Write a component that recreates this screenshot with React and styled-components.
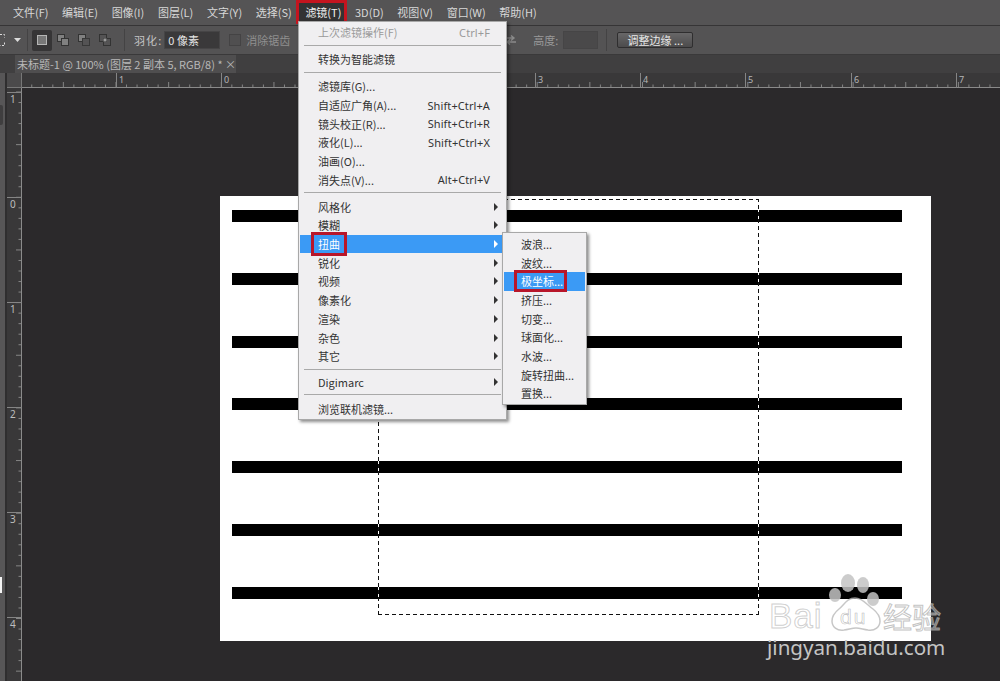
import React from 'react';
import styled, { createGlobalStyle } from 'styled-components';

const GlobalStyle = createGlobalStyle`
  html, body {
    margin: 0;
    padding: 0;
    background: #2b292b;
    overflow: hidden;
  }
  body {
    font-family: "Noto Sans CJK SC", "Noto Sans", sans-serif;
    font-size: 11px;
  }
  * {
    box-sizing: border-box;
  }
`;

const Page = styled.div`
  position: relative;
  display: flex;
  flex-direction: column;
  width: 1000px;
  height: 681px;
  overflow: hidden;
  background: #2b292b;
`;

const MenuBar = styled.div`
  display: flex;
  align-items: center;
  gap: 13.6px;
  height: 26px;
  padding: 0 0 2px 13px;
  background: #555455;
  border-bottom: 1px solid #363536;
  color: #d8d8d8;
  white-space: nowrap;
`;

const MenuTitle = styled.div`
  position: relative;
  line-height: 24px;
  ${props => props.active && `
    color: #f0f0f0;
    &::before {
      content: '';
      position: absolute;
      inset: 0 -6px 0 -9px;
      background: #333233;
      border: 3px solid #c4141f;
      z-index: 0;
    }
  `}
`;

const TitleText = styled.span`
  position: relative;
`;

const OptionsBar = styled.div`
  display: flex;
  align-items: center;
  height: 29px;
  background: #545354;
  border-bottom: 1px solid #3a393a;
  color: #bdbdbd;
  white-space: nowrap;
`;

const ModeButton = styled.div`
  display: flex;
  align-items: center;
  justify-content: center;
  width: 20px;
  height: 21px;
  margin-right: 1px;
  border-radius: 2px;
  background: ${props => (props.active ? '#363536' : 'transparent')};
`;

const Divider = styled.div`
  width: 1px;
  height: 22px;
  background: #444344;
  margin: ${props => props.margin};
`;

const Label = styled.span`
  color: ${props => props.color || '#c4c4c4'};
  margin-right: ${props => props.gap || 0}px;
  letter-spacing: ${props => props.spacing || 0}px;
`;

const FieldBox = styled.div`
  display: flex;
  align-items: center;
  width: ${props => props.width}px;
  height: 18px;
  padding-left: 3px;
  background: ${props => props.bg || '#3a393a'};
  border: 1px solid #464546;
  color: #e4e4e4;
`;

const CheckBox = styled.div`
  width: 12px;
  height: 12px;
  margin: 0 5px 0 9px;
  background: #504f50;
  border: 1px solid #444344;
`;

const EdgeButton = styled.div`
  display: flex;
  align-items: center;
  justify-content: center;
  width: 76px;
  height: 16px;
  background: linear-gradient(#686768, #4c4b4c);
  border: 1px solid #2f2e2f;
  border-radius: 2px;
  color: #e8e8e8;
`;

const TabBar = styled.div`
  display: flex;
  align-items: flex-end;
  height: 18px;
  padding-left: 15px;
  background: #403f40;
`;

const DocTab = styled.div`
  display: flex;
  align-items: center;
  justify-content: space-between;
  width: 221px;
  height: 18px;
  padding: 0 0 0 2px;
  background: #4f4e4f;
  color: #b8b8b8;
  font-size: 11px;
  white-space: nowrap;
`;

const Workspace = styled.div`
  flex: 1;
  display: grid;
  grid-template-columns: 5px 2px 15px 1fr;
  grid-template-rows: 15px 1fr;
`;

const ToolStrip = styled.div`
  grid-row: 1 / 3;
  position: relative;
  background: #575657;
`;

const StripGrip = styled.div`
  position: absolute;
  left: 0;
  top: 32px;
  width: 3px;
  height: 20px;
  background: #3f3e3f;
  border-radius: 0 2px 2px 0;
`;

const StripSwatch = styled.div`
  position: absolute;
  left: 0;
  top: 504px;
  width: 2px;
  height: 16px;
  background: #f4f4f4;
`;

const StripGap = styled.div`
  grid-row: 1 / 3;
  background: #2f2e2f;
`;

const RulerCorner = styled.div`
  background: #4b4a4b;
  border-right: 1px solid #777;
  border-bottom: 1px solid #777;
`;

const TopRuler = styled.div`
  background: #393839;
  overflow: hidden;
  line-height: 0;
`;

const SideRuler = styled.div`
  background: #393839;
  overflow: hidden;
  line-height: 0;
`;

const Canvas = styled.div`
  background: #2b292b;
  padding: 108px 0 0 198px;
`;

const Document = styled.div`
  position: relative;
  display: flex;
  flex-direction: column;
  justify-content: space-between;
  width: 711px;
  height: 445px;
  padding: 14px 29px 42px 12px;
  background: #fff;
`;

const Stripe = styled.div`
  height: 12px;
  background: #000;
`;

const Selection = styled.div`
  position: absolute;
  left: 158px;
  top: 3px;
  width: 381px;
  height: 416px;
  background-image:
    repeating-linear-gradient(90deg, #111 0 4px, #fff 4px 7px),
    repeating-linear-gradient(90deg, #111 0 4px, #fff 4px 7px),
    repeating-linear-gradient(0deg, #111 0 4px, #fff 4px 7px),
    repeating-linear-gradient(0deg, #111 0 4px, #fff 4px 7px);
  background-size: 100% 1px, 100% 1px, 1px 100%, 1px 100%;
  background-position: 0 0, 0 100%, 0 0, 100% 0;
  background-repeat: no-repeat;
`;

const Menu = styled.div`
  position: absolute;
  left: ${props => props.left}px;
  top: ${props => props.top}px;
  width: ${props => props.width}px;
  padding: ${props => props.pad};
  background: #f0eff1;
  border: 1px solid #a8a8a8;
  box-shadow: 2px 2px 3px rgba(0, 0, 0, 0.45);
  color: #333;
  white-space: nowrap;
  z-index: 5;
`;

const Row = styled.div`
  position: relative;
  display: flex;
  align-items: center;
  justify-content: space-between;
  height: 18.7px;
  padding: ${props => props.pad};
  color: ${props => (props.disabled ? '#9a9a9a' : props.active ? '#fff' : '#333')};
  background: ${props => (props.active ? '#3b9af5' : 'transparent')};
`;

const Shortcut = styled.span`
  color: inherit;
  font-family: "Noto Sans", sans-serif;
  font-size: 11px;
  letter-spacing: 0.1px;
`;

const Arrow = styled.i`
  position: absolute;
  right: 7px;
  top: 50%;
  margin-top: -4px;
  width: 0;
  height: 0;
  border-left: 4px solid ${props => (props.active ? '#fff' : '#333')};
  border-top: 4px solid transparent;
  border-bottom: 4px solid transparent;
`;

const Sep = styled.div`
  height: 1px;
  margin: 3px 4px ${props => props.below || 4.3}px;
  background: #a9a9a9;
`;

const Marked = styled.span`
  position: relative;
  &::after {
    content: '';
    position: absolute;
    inset: ${props => props.inset};
    border: 3px solid #b8162a;
  }
`;

const Watermark = styled.div`
  position: absolute;
  left: 765px;
  top: 572px;
  width: 190px;
  height: 90px;
  z-index: 3;
`;

const WmPaw = styled.svg`
  position: absolute;
  left: 0;
  top: 0;
`;

const WmBai = styled.span`
  position: absolute;
  left: 4px;
  top: 22px;
  font-family: "Liberation Sans", sans-serif;
  font-size: 35px;
  line-height: 44px;
  color: rgba(255, 255, 255, 0.4);
  -webkit-text-stroke: 1px rgba(175, 175, 175, 0.6);
  letter-spacing: 1px;
`;

const WmDu = styled.span`
  position: absolute;
  left: 75px;
  top: 33px;
  font-family: "Liberation Sans", sans-serif;
  font-size: 21px;
  line-height: 24px;
  letter-spacing: 2px;
  color: rgba(255, 255, 255, 0.3);
  -webkit-text-stroke: 0.6px rgba(170, 170, 170, 0.8);
`;

const WmCn = styled.span`
  position: absolute;
  left: 118px;
  top: 26px;
  font-size: 29px;
  line-height: 36px;
  color: rgba(255, 255, 255, 0.35);
  -webkit-text-stroke: 1px rgba(175, 175, 175, 0.75);
`;

const WmUrl = styled.span`
  position: absolute;
  left: 2px;
  top: 61px;
  font-family: "Noto Sans", sans-serif;
  font-size: 20.6px;
  line-height: 28px;
  color: #c4c4c4;
`;

const TOP_MENU = ['文件(F)', '编辑(E)', '图像(I)', '图层(L)', '文字(Y)', '选择(S)', '滤镜(T)', '3D(D)', '视图(V)', '窗口(W)', '帮助(H)'];

const GROUP_ONE = [
  ['滤镜库(G)...', ''],
  ['自适应广角(A)...', 'Shift+Ctrl+A'],
  ['镜头校正(R)...', 'Shift+Ctrl+R'],
  ['液化(L)...', 'Shift+Ctrl+X'],
  ['油画(O)...', ''],
  ['消失点(V)...', 'Alt+Ctrl+V']
];

const GROUP_TWO = ['风格化', '模糊', '扭曲', '锐化', '视频', '像素化', '渲染', '杂色', '其它'];

const WARP_ITEMS = ['波浪...', '波纹...', '极坐标...', '挤压...', '切变...', '球面化...', '水波...', '旋转扭曲...', '置换...'];

const ROW_PAD = '0 15px 0 18px';

const SquareIcon = ({ variant }) => (
  <svg width="14" height="14" viewBox="0 0 14 14">
    {variant === 'new' && <rect x="2.5" y="2.5" width="9" height="9" fill="#777" stroke="#b5b5b5" />}
    {variant === 'add' && (
      <>
        <rect x="1.5" y="1.5" width="7" height="7" fill="#808080" stroke="#333" />
        <rect x="5.5" y="5.5" width="7" height="7" fill="#808080" stroke="#333" />
      </>
    )}
    {variant === 'sub' && (
      <>
        <rect x="1.5" y="1.5" width="7" height="7" fill="#808080" stroke="#333" />
        <rect x="5.5" y="5.5" width="7" height="7" fill="#545354" stroke="#383838" />
      </>
    )}
    {variant === 'cross' && (
      <>
        <rect x="1.5" y="1.5" width="7" height="7" fill="none" stroke="#333" />
        <rect x="5.5" y="5.5" width="7" height="7" fill="none" stroke="#333" />
        <rect x="5.5" y="5.500" width="3" height="3" fill="#999" />
      </>
    )}
  </svg>
);

const HORIZONTAL_MAJORS = [[94, '1'], [199, '0'], [513, '3'], [618, '4'], [723, '5'], [829, '6'], [934, '7']];
const VERTICAL_MAJORS = [[4, '1'], [109, '0'], [214, '1'], [319, '2'], [424, '3'], [529, '4']];

const ticks = (count, start) => {
  const out = [];
  for (let i = 0; i < count; i += 1) {
    out.push({ pos: start + i * 10.53, long: i % 5 === 0 });
  }
  return out;
};

const HRuler = () => (
  <svg width="978" height="15">
    <line x1="0" y1="14.5" x2="978" y2="14.5" stroke="#8a8a8a" />
    {ticks(96, -11.3).map(t => (
      <line key={t.pos} x1={t.pos} x2={t.pos} y1={t.long ? 9 : 11.5} y2="14" stroke="#858585" />
    ))}
    {HORIZONTAL_MAJORS.map(([x, label]) => (
      <g key={x}>
        <line x1={x + 0.5} x2={x + 0.5} y1="0" y2="15" stroke="#858585" />
        <text x={x + 3} y="10" fontSize="9" fill="#b5b5b5" fontFamily="Noto Sans, sans-serif">{label}</text>
      </g>
    ))}
  </svg>
);

const VRuler = () => (
  <svg width="15" height="593">
    <line x1="14.5" y1="0" x2="14.5" y2="593" stroke="#8a8a8a" />
    {ticks(58, 4).map(t => (
      <line key={t.pos} y1={t.pos} y2={t.pos} x1={t.long ? 9 : 11.5} x2="14" stroke="#858585" />
    ))}
    {VERTICAL_MAJORS.map(([y, label]) => (
      <g key={y}>
        <line y1={y + 0.5} y2={y + 0.5} x1="0" x2="15" stroke="#858585" />
        <text x="3" y={y + 11} fontSize="10" fill="#bdbdbd" fontFamily="Noto Sans, sans-serif">{label}</text>
      </g>
    ))}
  </svg>
);

export default function App() {
  return (
    <Page>
      <GlobalStyle />
      <MenuBar>
        {TOP_MENU.map(name => (
          <MenuTitle key={name} active={name === '滤镜(T)'}>
            <TitleText>{name}</TitleText>
          </MenuTitle>
        ))}
      </MenuBar>

      <OptionsBar>
        <svg width="7" height="14" viewBox="0 0 7 14" style={{ marginRight: 7 }}>
          <path d="M0 1.5h4.5v3M4.5 9.5v3H0" fill="none" stroke="#ddd" strokeDasharray="2 1.5" />
        </svg>
        <svg width="7" height="4" viewBox="0 0 7 4">
          <path d="M0 0h7L3.5 4z" fill="#ddd" />
        </svg>
        <Divider margin="0 4px 0 6px" />
        <ModeButton active><SquareIcon variant="new" /></ModeButton>
        <ModeButton><SquareIcon variant="add" /></ModeButton>
        <ModeButton><SquareIcon variant="sub" /></ModeButton>
        <ModeButton><SquareIcon variant="cross" /></ModeButton>
        <Divider margin="0 9px 0 8px" />
        <Label gap={2} spacing={1.1}>羽化:</Label>
        <FieldBox width={56}>0 像素</FieldBox>
        <CheckBox />
        <Label color="#8f8f8f" gap={-2}>消除锯齿</Label>
        <svg width="13" height="12" viewBox="0 0 13 12" style={{ margin: '0 16px 0 216px' }}>
          <path d="M1 4h8M7 1.5L10 4 7 6.5M12 8H4M6 5.5L3 8l3 2.500" fill="none" stroke="#8a8a8a" strokeWidth="1.400" />
        </svg>
        <Label color="#9a9a9a" gap={5}>高度:</Label>
        <FieldBox width={35} bg="#4a494a" />
        <Divider margin="0 10px 0 8px" />
        <EdgeButton>调整边缘 ...</EdgeButton>
      </OptionsBar>

      <TabBar>
        <DocTab>
          <span>未标题-1 @ 100% (图层 2 副本 5, RGB/8) *</span>
          <span>×</span>
        </DocTab>
      </TabBar>

      <Workspace>
        <ToolStrip>
          <StripGrip />
          <StripSwatch />
        </ToolStrip>
        <StripGap />
        <RulerCorner />
        <TopRuler><HRuler /></TopRuler>
        <SideRuler><VRuler /></SideRuler>
        <Canvas>
          <Document>
            {[0, 1, 2, 3, 4, 5, 6].map(i => <Stripe key={i} />)}
            <Selection />
          </Document>
        </Canvas>
      </Workspace>

      <Menu left={298} top={21} width={209} pad="1px 1px 0">
        <Row pad={ROW_PAD} disabled>上次滤镜操作(F)<Shortcut>Ctrl+F</Shortcut></Row>
        <Sep />
        <Row pad={ROW_PAD}>转换为智能滤镜</Row>
        <Sep />
        {GROUP_ONE.map(([label, keys]) => (
          <Row key={label} pad={ROW_PAD}>{label}{keys && <Shortcut>{keys}</Shortcut>}</Row>
        ))}
        <Sep />
        {GROUP_TWO.map(label => (
          <Row key={label} pad={ROW_PAD} active={label === '扭曲'}>
            {label === '扭曲' ? <Marked inset="-4px -7px">{label}</Marked> : label}
            <Arrow active={label === '扭曲'} />
          </Row>
        ))}
        <Sep below={2.8} />
        <Row pad={ROW_PAD}>Digimarc<Arrow /></Row>
        <Sep below={5} />
        <Row pad={ROW_PAD}>浏览联机滤镜...</Row>
      </Menu>

      <Menu left={502} top={232} width={85} pad="1.500px 1px 1px">
        {WARP_ITEMS.map(label => (
          <Row key={label} pad="0 0 0 17px" active={label === '极坐标...'}>
            {label === '极坐标...' ? <Marked inset="-3px -4px -3px -7px">{label}</Marked> : label}
          </Row>
        ))}
      </Menu>

      <Watermark>
        <WmBai>Bai</WmBai>
        <WmPaw width="190" height="62" viewBox="0 0 190 62">
          <ellipse cx="83" cy="11" rx="7" ry="9" fill="rgba(195,195,195,0.85)" />
          <ellipse cx="98" cy="13" rx="6" ry="8" fill="rgba(195,195,195,0.85)" />
          <ellipse cx="70" cy="23" rx="6" ry="7" fill="rgba(195,195,195,0.85)" />
          <ellipse cx="108" cy="27" rx="6" ry="7" fill="rgba(195,195,195,0.85)" />
          <path d="M90 26c-8 0-11 7-16 11-5 4-7 8-7 12 0 6 5 10 12 9 6-1 8-2 12-2s6 1 12 2c7 1 12-3 12-9 0-5-2-8-7-12-6-4-10-11-18-11z" fill="rgba(255,255,255,0.25)" stroke="rgba(180,180,180,0.75)" strokeWidth="1.500" />
        </WmPaw>
        <WmDu>du</WmDu>
        <WmCn>经验</WmCn>
        <WmUrl>jingyan.baidu.com</WmUrl>
      </Watermark>
    </Page>
  );
}
